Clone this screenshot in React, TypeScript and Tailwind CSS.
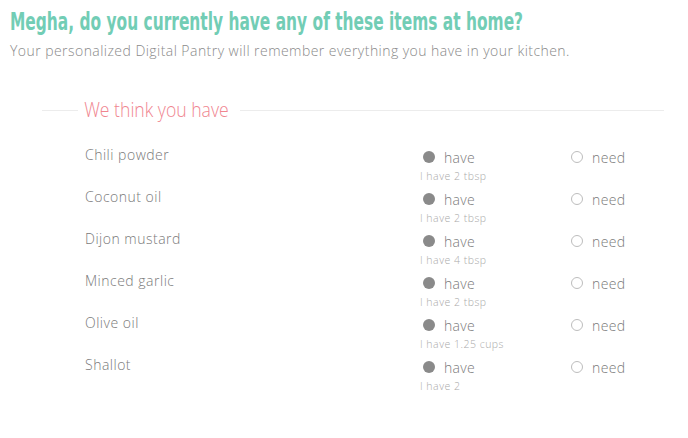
import React from "react";

const items = [
  { name: "Chili powder", amt: "I have 2 tbsp" },
  { name: "Coconut oil", amt: "I have 2 tbsp" },
  { name: "Dijon mustard", amt: "I have 4 tbsp" },
  { name: "Minced garlic", amt: "I have 2 tbsp" },
  { name: "Olive oil", amt: "I have 1.25 cups" },
  { name: "Shallot", amt: "I have 2" },
];

export default function App() {
  return (
    <div className="w-[688px] h-[438px] bg-white overflow-hidden pl-[10px] pt-[7px]" style={{ fontFamily: "'Open Sans', sans-serif" }}>
      <h1
        className="text-[25px] leading-[30px] font-bold text-[#72cdb5] whitespace-nowrap"
        style={{ fontFamily: "'DejaVu Sans Condensed', 'DejaVu Sans', sans-serif", transform: "scaleX(0.686)", transformOrigin: "left" }}
      >
        Megha, do you currently have any of these items at home?
      </h1>
      <p className="text-[14px] leading-[18px] text-[#8a8a8a] mt-[5px] tracking-[0.45px] whitespace-nowrap" style={{ fontWeight: 300 }}>
        Your personalized Digital Pantry will remember everything you have in your kitchen.
      </p>
      <div className="ml-[32px] w-[622px] mt-[37px]">
        <div className="flex items-center">
          <div className="w-[36px] h-px bg-[#ececec]" />
          <div className="px-[7px] text-[20px] leading-[26px] text-[#f0858f] whitespace-nowrap" style={{ fontWeight: 300, transform: "scaleX(0.88)", transformOrigin: "left" }}>
            We think you have
          </div>
          <div className="flex-1 h-px bg-[#ececec] -ml-[16px]" />
        </div>
        <div className="pl-[43px] mt-[22px] flex flex-col">
          {items.map((it) => (
            <div key={it.name} className="flex h-[42px]">
              <div className="w-[335px] text-[14px] leading-[20px] text-[#7a7a7a] tracking-[0.5px]" style={{ fontWeight: 300 }}>
                {it.name}
              </div>
              <div className="w-[150px] flex flex-col">
                <div className="flex items-center h-[20px] mt-[2px] pl-[3px]">
                  <span className="w-[12px] h-[12px] rounded-full bg-[#8a8a8a]" />
                  <span className="ml-[9px] text-[14px] text-[#7a7a7a] tracking-[0.3px]" style={{ fontWeight: 300 }}>have</span>
                </div>
                <div className="text-[10.5px] leading-[14px] text-[#aaaaaa] mt-[2px] tracking-[0.5px]" style={{ fontWeight: 300 }}>{it.amt}</div>
              </div>
              <div className="flex items-center h-[20px] mt-[2px] pl-[1px]">
                <span className="w-[12px] h-[12px] rounded-full border border-[#bdbdbd]" />
                <span className="ml-[9px] text-[14px] text-[#7a7a7a] tracking-[0.4px]" style={{ fontWeight: 300 }}>need</span>
              </div>
            </div>
          ))}
        </div>
      </div>
    </div>
  );
}
